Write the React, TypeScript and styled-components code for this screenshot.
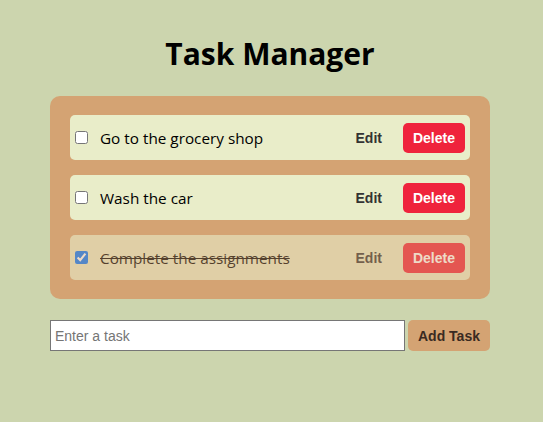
import React, { useState } from "react";
import styled, { createGlobalStyle } from "styled-components";

const Global = createGlobalStyle`
  html, body { margin: 0; padding: 0; background: #ccd5ae; }
  body { font-family: "Open Sans", "Noto Sans", sans-serif; }
`;

const Outer = styled.div`
  padding: 21px 53px 0 50px;
  display: flex;
  justify-content: center;
`;

const Page = styled.div`
  width: 440px;
  display: flex;
  flex-direction: column;
`;

const Title = styled.h1`
  margin: 11px 0 20px;
  text-align: center;
  font-size: 30px;
  line-height: 44px;
  font-weight: 700;
  color: #000;
  font-family: "Open Sans", sans-serif;
`;

const Panel = styled.div`
  background: #d4a373;
  border-radius: 10px;
  padding: 19px 20px;
  display: flex;
  flex-direction: column;
  gap: 15px;
`;

const Row = styled.div<{ $done: boolean }>`
  height: 45px;
  box-sizing: border-box;
  background: #e9edc9;
  border-radius: 5px;
  padding: 0 5px;
  display: flex;
  align-items: center;
  opacity: ${(p) => (p.$done ? 0.6 : 1)};
`;

const Check = styled.input`
  width: 13px;
  height: 13px;
  margin: 0 12px 0 0;
`;

const Label = styled.span<{ $done: boolean }>`
  flex: 1;
  font-size: 15.3px;
  color: #000;
  text-decoration: ${(p) => (p.$done ? "line-through" : "none")};
`;

const Btn = styled.button<{ $kind: "edit" | "delete" }>`
  font-family: "Liberation Sans", Arial, sans-serif;
  font-weight: 700;
  font-size: 14px;
  border: none;
  border-radius: 5px;
  height: 30px;
  padding: 0 ${(p) => (p.$kind === "delete" ? "10px" : "12px")};
  cursor: pointer;
  background: ${(p) => (p.$kind === "delete" ? "#ef233c" : "transparent")};
  color: ${(p) => (p.$kind === "delete" ? "#fff" : "#333")};
  margin-left: ${(p) => (p.$kind === "delete" ? "9px" : "0")};
`;

const Form = styled.div`
  margin-top: 21px;
  display: flex;
  gap: 3px;
`;

const Input = styled.input`
  flex: 1;
  height: 31px;
  box-sizing: border-box;
  border: 1px solid #767676;
  font-family: "Liberation Sans", Arial, sans-serif;
  font-size: 14px;
  padding: 0 4px;
  &::placeholder { color: #757575; }
`;

const AddBtn = styled.button`
  width: 82px;
  height: 31px;
  border: none;
  border-radius: 5px;
  background: #d4a373;
  color: #3a2a22;
  font-family: "Liberation Sans", Arial, sans-serif;
  font-weight: 700;
  font-size: 14px;
`;

const initial = [
  { text: "Go to the grocery shop", done: false },
  { text: "Wash the car", done: false },
  { text: "Complete the assignments", done: true },
];

export default function App() {
  const [tasks, setTasks] = useState(initial);
  return (
    <>
      <Global />
      <Outer>
        <Page>
          <Title>Task Manager</Title>
          <Panel>
            {tasks.map((t, i) => (
              <Row key={i} $done={t.done}>
                <Check
                  type="checkbox"
                  checked={t.done}
                  onChange={() =>
                    setTasks(tasks.map((x, j) => (j === i ? { ...x, done: !x.done } : x)))
                  }
                />
                <Label $done={t.done}>{t.text}</Label>
                <Btn $kind="edit">Edit</Btn>
                <Btn $kind="delete">Delete</Btn>
              </Row>
            ))}
          </Panel>
          <Form>
            <Input placeholder="Enter a task" />
            <AddBtn>Add Task</AddBtn>
          </Form>
        </Page>
      </Outer>
    </>
  );
}
